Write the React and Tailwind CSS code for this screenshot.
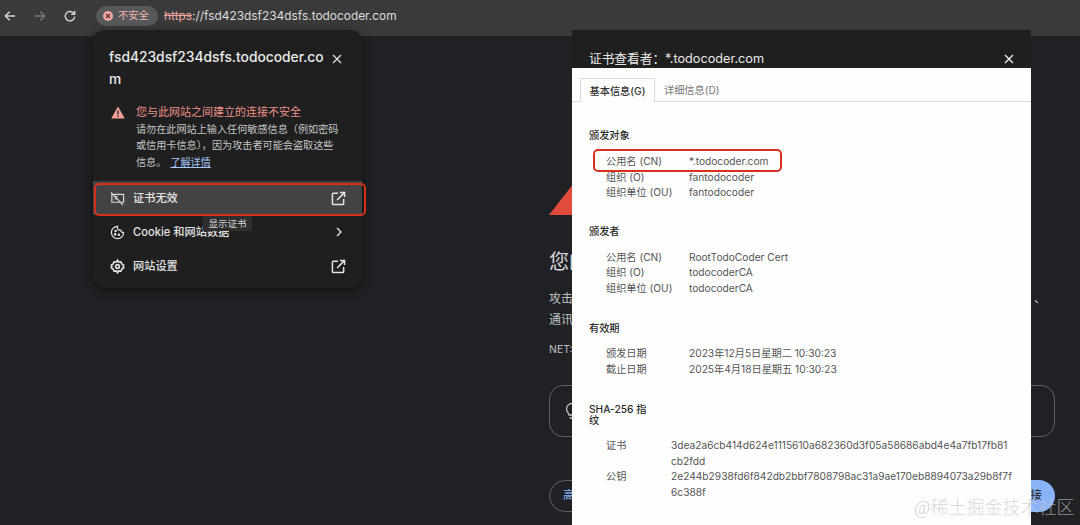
import React from "react";

const sans = `font-['Inter','Noto_Sans_CJK_SC',sans-serif]`;

function ExtIcon() {
  return (
    <svg width="15" height="15" viewBox="0 0 16 16" fill="none" stroke="#e3e3e3" strokeWidth="1.6">
      <path d="M7.500 2.500H2.500a1 1 0 0 0-1 1v10a1 1 0 0 0 1 1h10a1 1 0 0 0 1-1V8.500" />
      <path d="M6.500 9.500 14 2M9.500 1.500H14.500V6.500" />
    </svg>
  );
}

function MenuRow({ icon, label, right, active }) {
  return (
    <div className={`flex items-center h-[34px] pl-[17px] pr-[16px] ${active ? "bg-[#434343]" : ""}`}>
      <span className="w-[15px] h-[15px] flex items-center justify-center">{icon}</span>
      <span className="ml-[8px] text-[11.2px] text-[#e3e3e3] font-medium flex-1 whitespace-nowrap">{label}</span>
      {right}
    </div>
  );
}

function Row({ k, v }) {
  return (
    <div className="grid grid-cols-[83px_1fr] h-[15.5px] items-center">
      <span>{k}</span>
      <span>{v}</span>
    </div>
  );
}

function Section({ title, children, className, bodyClass = "mt-[11px]" }) {
  return (
    <div className={className}>
      <div className="text-[10.2px] leading-[14px] text-[#2a2a2a] font-medium">{title}</div>
      <div className={`${bodyClass} pl-[17px] text-[10.2px] text-[#555]`}>{children}</div>
    </div>
  );
}

export default function App() {
  return (
    <div className={`relative w-[1080px] h-[525px] overflow-hidden bg-[#202124] ${sans}`}>
      {/* toolbar */}
      <div className="h-[36px] bg-[#3a3a3b] flex items-center pl-[4px] pb-[4px]">
        <svg width="12" height="12" viewBox="0 0 14 14" fill="none" stroke="#d5d5d5" strokeWidth="1.6">
          <path d="M13 7H2M6.500 2 1.500 7l5 5" />
        </svg>
        <svg className="ml-[18px]" width="12" height="12" viewBox="0 0 14 14" fill="none" stroke="#7a7a7a" strokeWidth="1.6">
          <path d="M1 7h11M7.500 2l5 5-5 5" />
        </svg>
        <svg className="ml-[18px]" width="12" height="12" viewBox="0 0 14 14" fill="none" stroke="#d5d5d5" strokeWidth="1.6">
          <path d="M11.800 4.500A5.500 5.500 0 1 0 12.500 7.500" />
          <path d="M12.500 1v4h-4" />
        </svg>
        <div className="ml-[20px] h-[20px] w-[62px] rounded-full bg-[#57585a] flex items-center pl-[7px]">
          <span className="w-[10px] h-[10px] rounded-full bg-[#f2a7a0] flex items-center justify-center">
            <svg width="6" height="6" viewBox="0 0 6 6" stroke="#4a2a2a" strokeWidth="1.1"><path d="M1 1l4 4M5 1 1 5" /></svg>
          </span>
          <span className="ml-[5px] text-[10.3px] text-[#f2b5ae] whitespace-nowrap">不安全</span>
        </div>
        <div className="ml-[6px] text-[11.9px] whitespace-nowrap text-[#dcdcdc]">
          <span className="text-[#eba59f] line-through">https</span>://fsd423dsf234dsfs.todocoder.com
        </div>
      </div>

      {/* interstitial page behind */}
      <div className="ml-[549px] w-[506px] pt-[134px] text-[#bdc1c6]">
        <div className="w-0 h-0 border-l-[35px] border-r-[35px] border-b-[45px] border-l-transparent border-r-transparent border-b-[#e04b3a]" />
        <div className="mt-[34px] w-[23px] overflow-hidden whitespace-nowrap text-[20px] leading-[26px] text-[#d7d9dc]">您的</div>
        <div className="mt-[14px] text-[12px] leading-[20.5px]">
          <div className="flex justify-between"><span>攻击</span><span className="pr-[9px]">、</span></div>
          <div>通讯</div>
        </div>
        <div className="mt-[13px] text-[10.5px] leading-[13px]">NET:</div>
        <div className="mt-[29px] h-[52px] rounded-[14px] border border-[#5f6368] flex items-center pl-[14px]">
          <svg width="16" height="18" viewBox="0 0 16 18" fill="none" stroke="#bdc1c6" strokeWidth="1.3">
            <path d="M5 13c0-2-2.500-3-2.500-6a5.500 5.500 0 0 1 11 0c0 3-2.500 4-2.500 6zM5.500 16h5" />
          </svg>
        </div>
        <div className="mt-[43px] flex justify-between">
          <div className="h-[32px] w-[60px] rounded-full border border-[#5f6368] flex items-center pl-[13px] text-[11.5px] text-[#8ab4f8]">高</div>
          <div className="h-[32px] w-[90px] rounded-full bg-[#8ab4f8] flex items-center justify-end pr-[13px] text-[11.5px] text-[#202124] whitespace-nowrap">接</div>
        </div>
      </div>

      {/* site info popup */}
      <div className="absolute left-[93px] top-[30px] w-[269px] h-[258px] rounded-[12px] bg-[#1f1f1f] shadow-[0_2px_10px_rgba(0,0,0,0.5)]">
        <div className="flex pl-[16px] pt-[16px]">
          <div className="w-[216px] text-[13.8px] leading-[22px] font-medium text-[#ececec] break-all">fsd423dsf234dsfs.todocoder.com</div>
          <svg className="ml-[7px] mt-[8px]" width="10" height="10" viewBox="0 0 10 10" stroke="#e3e3e3" strokeWidth="1.2"><path d="M1 1l8 8M9 1 1 9" /></svg>
        </div>
        <div className="flex pl-[18px] mt-[14px]">
          <svg className="mt-[2px]" width="14" height="13" viewBox="0 0 14 13"><path d="M7 0.500 13.800 12.500H0.200z" fill="#f2a097" /><path d="M7 4.500v4M7 9.500v1.500" stroke="#1f1f1f" strokeWidth="1.3" /></svg>
          <div className="ml-[11px] w-[205px] text-[10.15px] leading-[16.5px]">
            <div className="text-[11px] text-[#ec9288] whitespace-nowrap">您与此网站之间建立的连接不安全</div>
            <div className="text-[#c4c7c5] whitespace-nowrap">请勿在此网站上输入任何敏感信息（例如密码</div>
            <div className="text-[#c4c7c5] whitespace-nowrap">或信用卡信息），因为攻击者可能会盗取这些</div>
            <div className="text-[#c4c7c5] whitespace-nowrap">信息。<span className="ml-[4px] text-[#a8c7fa] underline">了解详情</span></div>
          </div>
        </div>
        <div className="mt-[11px]">
          <MenuRow
            active
            label="证书无效"
            icon={
              <svg width="15" height="15" viewBox="0 0 16 16" fill="none" stroke="#d8d8d8" strokeWidth="1.3">
                <path d="M2 3.500H14.500V12H2zM1 1.500l13 13.500" />
                <path d="M5 6h3M5 8.500h2" />
              </svg>
            }
            right={<ExtIcon />}
          />
          <MenuRow
            label="Cookie 和网站数据"
            icon={
              <svg width="15" height="15" viewBox="0 0 16 16" fill="none" stroke="#e3e3e3" strokeWidth="1.3">
                <path d="M8 1.500a6.500 6.500 0 1 0 6.500 6.500 3 3 0 0 1-3-2.500 3 3 0 0 1-3.500-4z" />
                <circle cx="6" cy="6.500" r="0.700" fill="#e3e3e3" />
                <circle cx="5.500" cy="10" r="0.700" fill="#e3e3e3" />
                <circle cx="9.500" cy="10.500" r="0.700" fill="#e3e3e3" />
              </svg>
            }
            right={
              <svg className="mr-[3px]" width="8" height="10" viewBox="0 0 8 10" fill="none" stroke="#e3e3e3" strokeWidth="1.4"><path d="M2 1l4 4-4 4" /></svg>
            }
          />
          <MenuRow
            label="网站设置"
            icon={
              <svg width="15" height="15" viewBox="0 0 24 24" fill="none" stroke="#e3e3e3" strokeWidth="2.6">
                <path d="M12 2l2 3 3.500-.5L19 8l3 2-1 2 1 2-3 2-1.500 3.500L14 19l-2 3-2-3-3.500.5L5 16l-3-2 1-2-1-2 3-2 1.500-3.500L10 5z" />
                <circle cx="12" cy="12" r="3" />
              </svg>
            }
            right={<ExtIcon />}
          />
        </div>
      </div>

      {/* red annotation on popup */}
      <div className="absolute left-[94px] top-[183px] w-[272px] h-[33px] rounded-[5px] border-[2px] border-[#d8301c]" />

      {/* tooltip */}
      <div className="absolute left-[203px] top-[216px] w-[49px] h-[15px] bg-[#2e2e2e] text-[9.5px] leading-[15px] text-center text-[#d4d4d4] whitespace-nowrap">显示证书</div>

      {/* certificate viewer */}
      <div className="absolute left-[572px] top-[30px] w-[459px] h-[495px] flex flex-col bg-[#fdfdfd]">
        <div className="h-[38px] bg-[#1f1f1f] flex items-end px-[17px]">
          <span className="flex-1 text-[12.7px] leading-[20px] -mb-[1px] text-[#e8e8e8]">证书查看者：*.todocoder.com</span>
          <svg className="mb-[4px]" width="10" height="10" viewBox="0 0 10 10" stroke="#f0f0f0" strokeWidth="1.3"><path d="M1 1l8 8M9 1 1 9" /></svg>
        </div>
        <div className="h-[34px] pl-[8px] pt-[12px] border-b border-[#d9d9d9] flex items-end text-[10.2px]">
          <div className="h-[24px] w-[75px] -mb-px pt-[2px] bg-[#fdfdfd] border border-b-0 border-[#d9d9d9] flex items-center justify-center font-medium text-[#333]">基本信息(G)</div>
          <div className="h-[23px] pt-[2px] ml-[9px] flex items-center text-[#777]">详细信息(D)</div>
        </div>
        <div className="pl-[17px] pr-[17px] pt-[26px]">
          <Section title="颁发对象" bodyClass="mt-[12px]">
            <Row k="公用名 (CN)" v="*.todocoder.com" />
            <Row k="组织 (O)" v="fantodocoder" />
            <Row k="组织单位 (OU)" v="fantodocoder" />
          </Section>
          <Section title="颁发者" className="mt-[23px]" bodyClass="mt-[12px]">
            <Row k="公用名 (CN)" v="RootTodoCoder Cert" />
            <Row k="组织 (O)" v="todocoderCA" />
            <Row k="组织单位 (OU)" v="todocoderCA" />
          </Section>
          <Section title="有效期" className="mt-[25px]">
            <Row k="颁发日期" v="2023年12月5日星期二 10:30:23" />
            <Row k="截止日期" v="2025年4月18日星期五 10:30:23" />
          </Section>
          <Section title={<span className="block w-[60px] leading-[11px]">SHA-256 指纹</span>} className="mt-[27px]">
            <div className="grid grid-cols-[65px_1fr] leading-[15.5px] mt-[12px]">
              <span>证书</span>
              <span className="whitespace-nowrap">3dea2a6cb414d624e1115610a682360d3f05a58686abd4e4a7fb17fb81<br />cb2fdd</span>
              <span>公钥</span>
              <span className="whitespace-nowrap">2e244b2938fd6f842db2bbf7808798ac31a9ae170eb8894073a29b8f7f<br />6c388f</span>
            </div>
          </Section>
        </div>
      </div>

      {/* red annotation on dialog */}
      <div className="absolute left-[593px] top-[149px] w-[189px] h-[23px] rounded-[5px] border-[2px] border-[#d8301c]" />

      {/* watermark */}
      <div className="absolute left-[914px] top-[495px] text-[18px] leading-[26px] font-['Liberation_Serif','Noto_Sans_CJK_SC',serif] font-light text-[#c8c8c8]/70 whitespace-nowrap">@稀土掘金技术社区</div>
    </div>
  );
}
